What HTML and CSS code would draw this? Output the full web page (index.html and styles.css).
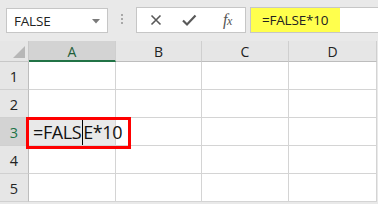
FILE: index.html
```html
<!DOCTYPE html>
<html>
<head>
<meta charset="utf-8">
<link rel="stylesheet" href="styles.css">
</head>
<body>
<div class="app">
  <div class="toolbar">
    <div class="namebox">
      <span class="nb-text">FALSE</span>
      <svg class="nb-arrow" width="8" height="5" viewBox="0 0 8 5"><path d="M0 0h8L4 4.5z" fill="#7a7a7a"/></svg>
    </div>
    <div class="grip"></div>
    <div class="buttons">
      <svg class="btn" width="14" height="14" viewBox="0 0 14 14"><path d="M2.5 2.5l9 9M11.5 2.5l-9 9" stroke="#595959" stroke-width="1.6" fill="none"/></svg>
      <svg class="btn" width="16" height="14" viewBox="0 0 16 14"><path d="M2 7.5l4 4L14.5 2.5" stroke="#595959" stroke-width="2.2" fill="none"/></svg>
      <span class="fx"><i>f</i><span class="x">x</span></span>
    </div>
    <div class="formula">
      <span class="formula-text">=FALSE*10</span>
    </div>
  </div>
  <div class="sheet">
    <div class="grid">
      <div class="corner"><span class="tri"></span></div>
      <div class="colh sel">A</div>
      <div class="colh">B</div>
      <div class="colh">C</div>
      <div class="colh">D</div>

      <div class="rowh">1</div>
      <div class="cell"></div><div class="cell"></div><div class="cell"></div><div class="cell"></div>

      <div class="rowh">2</div>
      <div class="cell"></div><div class="cell"></div><div class="cell"></div><div class="cell"></div>

      <div class="rowh selr">3</div>
      <div class="cell active"><span class="edit">=FALS<span class="caret"></span>E*10</span></div><div class="cell"></div><div class="cell"></div><div class="cell"></div>

      <div class="rowh">4</div>
      <div class="cell"></div><div class="cell"></div><div class="cell"></div><div class="cell"></div>

      <div class="rowh">5</div>
      <div class="cell"></div><div class="cell"></div><div class="cell"></div><div class="cell"></div>
    </div>
    <div class="highlight"></div>
  </div>
</div>
</body>
</html>
```

FILE: styles.css
```css
html, body {
  margin: 0;
  padding: 0;
  background: #e9e9e9;
  font-family: "Open Sans", "Liberation Sans", sans-serif;
}
.app {
  width: 378px;
  height: 204px;
  overflow: hidden;
  background: #e9e9e9;
}
.toolbar {
  height: 41px;
  display: flex;
  align-items: flex-start;
  box-sizing: border-box;
  padding-top: 7px;
  padding-left: 6px;
}
.namebox {
  width: 102px;
  height: 25px;
  margin-top: 1px;
  box-sizing: border-box;
  border: 1px solid #c6c6c6;
  background: #fff;
  display: flex;
  align-items: center;
  justify-content: space-between;
  padding: 0 7px 0 7px;
}
.nb-text {
  font-size: 13.5px;
  color: #222;
  letter-spacing: -0.2px;
}
.nb-arrow { margin-top: 1px; }
.grip {
  width: 2px;
  height: 11px;
  margin: 7px 13px 0 13px;
  background: repeating-linear-gradient(to bottom, #a8a8a8 0 2px, transparent 2px 4px);
}
.buttons {
  width: 110px;
  height: 26px;
  box-sizing: border-box;
  border: 1px solid #c6c6c6;
  background: #fff;
  display: flex;
  align-items: center;
  padding-left: 12px;
}
.buttons .btn:first-child { margin-right: 18px; }
.buttons .btn:nth-child(2) { margin-right: 26px; }
.fx {
  font-family: "Liberation Serif", serif;
  font-size: 16px;
  color: #555;
  letter-spacing: -0.5px;
}
.fx i { font-style: italic; }
.fx .x { font-style: italic; font-size: 12px; }
.formula {
  flex: 1;
  height: 26px;
  margin-left: 4px;
  box-sizing: border-box;
  border: 1px solid #c6c6c6;
  border-right: none;
  background: #fff;
  display: flex;
  align-items: stretch;
}
.formula-text {
  background: #ffff4d;
  width: 89px;
  box-sizing: border-box;
  padding-left: 11px;
  font-size: 13.5px;
  line-height: 24px;
  color: #222;
  letter-spacing: -0.2px;
}
.sheet {
  position: relative;
}
.grid {
  display: grid;
  grid-template-columns: 29px 87px 86px 87px 88px;
  grid-template-rows: 21px 28px 28px 28px 28px 28px;
}
.corner {
  background: #e6e6e6;
  border-right: 1px solid #c8c8c8;
  border-bottom: 1px solid #c8c8c8;
  box-sizing: border-box;
  position: relative;
}
.tri {
  position: absolute;
  right: 3px;
  bottom: 3px;
  width: 0;
  height: 0;
  border-left: 12px solid transparent;
  border-bottom: 12px solid #b7b7b7;
}
.colh {
  background: #e6e6e6;
  border-right: 1px solid #cfcfcf;
  border-bottom: 1px solid #bdbdbd;
  box-sizing: border-box;
  display: flex;
  align-items: center;
  justify-content: center;
  font-size: 14px;
  color: #222;
  padding-top: 1px;
}
.colh.sel {
  background: #d3d3d3;
  border-bottom: 2px solid #217346;
  color: #1f5f3a;
}
.rowh {
  background: #e6e6e6;
  border-right: 1px solid #bdbdbd;
  border-bottom: 1px solid #d0d0d0;
  box-sizing: border-box;
  display: flex;
  align-items: center;
  justify-content: center;
  font-size: 14.5px;
  color: #222;
  padding-top: 1px;
}
.rowh.selr {
  background: #d3d3d3;
  color: #217346;
}
.cell {
  background: #fff;
  border-right: 1px solid #d4d4d4;
  border-bottom: 1px solid #d4d4d4;
  box-sizing: border-box;
  position: relative;
}
.cell.active {
  z-index: 1;
  background: transparent;
}
.edit {
  position: absolute;
  left: 4px;
  top: 1px;
  white-space: nowrap;
  font-size: 18px;
  line-height: 27px;
  color: #111;
  letter-spacing: -0.4px;
}
.caret {
  display: inline-block;
  width: 1px;
  height: 27px;
  background: #000;
  vertical-align: top;
  margin: -1px 0.5px 0 0.5px;
}
.highlight {
  position: absolute;
  left: 26px;
  top: 76px;
  width: 105px;
  height: 32px;
  box-sizing: border-box;
  border: 3px solid #ff0000;
  z-index: 2;
  pointer-events: none;
}
```
